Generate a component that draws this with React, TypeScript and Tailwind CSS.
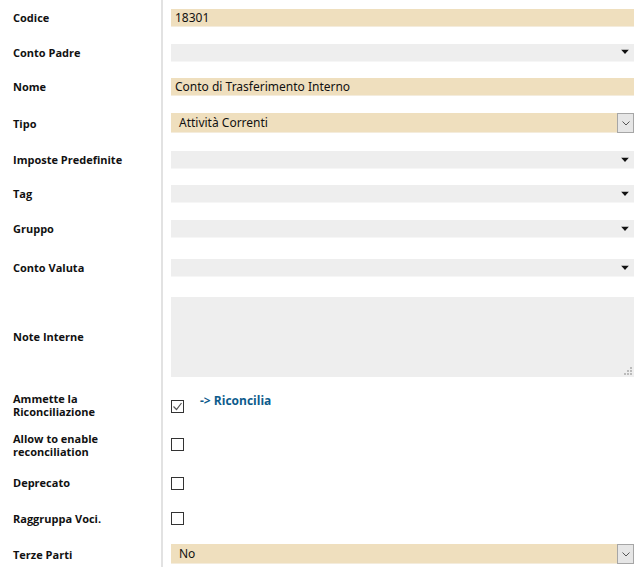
import React from "react";

const label = "text-[11px] font-bold text-[#111] leading-[13px]";
const lf = { fontFamily: '"Open Sans", "Noto Sans", sans-serif' };
const vf = { fontFamily: '"Noto Sans", "Open Sans", sans-serif' };

function Caret() {
  return (
    <svg width="8" height="5" viewBox="0 0 8 5" className="absolute right-[5px] top-1/2 -translate-y-1/2">
      <path d="M0 0h8L4 4.5z" fill="#111" />
    </svg>
  );
}

function GreySelect() {
  return <div className="relative h-[18px] w-full bg-[#eeeeee] border-b border-[#f6f6f6]"><Caret /></div>;
}

function BeigeInput({ value }: { value: string }) {
  return (
    <div className="h-[18px] w-full bg-[#efdfbe] border-b border-[#f4ecdc] pl-[4px] text-[12px] leading-[17px] text-[#111]" style={vf}>
      {value}
    </div>
  );
}

function BeigeSelect({ value }: { value: string }) {
  return (
    <div className="relative h-[20px] w-full bg-[#efdfbe] border-b border-[#f4ecdc] pl-[8px] text-[12px] leading-[19px] text-[#111]" style={vf}>
      {value}
      <div className="absolute right-0 top-0 h-[20px] w-[17px] bg-[#e6e6e6] border border-[#a6a6a6] flex items-center justify-center">
        <svg width="8" height="5" viewBox="0 0 8 5">
          <path d="M0.5 0.5L4 4l3.5-3.5" stroke="#555" strokeWidth="1" fill="none" />
        </svg>
      </div>
    </div>
  );
}

function Check({ on }: { on?: boolean }) {
  return (
    <div className="w-[13px] h-[13px] border border-[#333] bg-white flex items-center justify-center shrink-0">
      {on && (
        <svg width="11" height="11" viewBox="0 0 11 11">
          <path d="M1.5 5.5l3 3 5-6.5" stroke="#555" strokeWidth="1.2" fill="none" />
        </svg>
      )}
    </div>
  );
}

function Row({ name, h, children, top, labelCls }: { name: React.ReactNode; h: string; children: React.ReactNode; top?: string; labelCls?: string }) {
  return (
    <div className={`flex ${h}`}>
      <div className={`w-[163px] border-r-2 border-[#e2e2e2] pl-[13px] flex ${labelCls ?? "items-center"}`} style={lf}>
        <div className={label}>{name}</div>
      </div>
      <div className={`flex-1 pl-[8px] pr-[9px] flex ${top ?? "items-center"}`}>{children}</div>
    </div>
  );
}

export default function App() {
  return (
    <div className="bg-white w-[643px] h-[579px]">
      <Row name="Codice" h="h-[35px]"><BeigeInput value="18301" /></Row>
      <Row name="Conto Padre" h="h-[35px]"><GreySelect /></Row>
      <Row name="Nome" h="h-[34px]" labelCls="items-start pt-[10px]"><BeigeInput value="Conto di Trasferimento Interno" /></Row>
      <Row name="Tipo" h="h-[38px]"><BeigeSelect value="Attività Correnti" /></Row>
      <Row name="Imposte Predefinite" h="h-[36px]" labelCls="items-start pt-[11px]"><GreySelect /></Row>
      <Row name="Tag" h="h-[32px]" labelCls="items-start pt-[9px]"><GreySelect /></Row>
      <Row name="Gruppo" h="h-[38px]" labelCls="items-start pt-[12px]"><GreySelect /></Row>
      <Row name="Conto Valuta" h="h-[40px]" labelCls="items-start pt-[13px]"><GreySelect /></Row>
      <Row name="Note Interne" h="h-[98px]" labelCls="items-start pt-[42px]">
        <div className="relative w-full h-[80px] bg-[#eeeeee]">
          <svg width="8" height="8" viewBox="0 0 8 8" className="absolute right-[2px] bottom-[2px]">
            <rect x="6" y="0" width="2" height="2" fill="#bbb" />
            <rect x="3" y="3" width="2" height="2" fill="#bbb" />
            <rect x="6" y="3" width="2" height="2" fill="#bbb" />
            <rect x="0" y="6" width="2" height="2" fill="#bbb" />
            <rect x="3" y="6" width="2" height="2" fill="#bbb" />
            <rect x="6" y="6" width="2" height="2" fill="#bbb" />
          </svg>
        </div>
      </Row>
      <Row name={<>Ammette la<br />Riconciliazione</>} h="h-[41px]" top="items-start pt-[8px]" labelCls="items-start pt-[6px]">
        <div className="flex items-start">
          <div className="mt-[6px]"><Check on /></div>
          <a className="ml-[16px] text-[12px] font-bold text-[#0d5b8c] leading-[14px]" style={lf}>-&gt; Riconcilia</a>
        </div>
      </Row>
      <Row name={<>Allow to enable<br />reconciliation</>} h="h-[35px]"><Check /></Row>
      <Row name="Deprecato" h="h-[43px]" labelCls="items-start pt-[14px]"><Check /></Row>
      <Row name="Raggruppa Voci." h="h-[27px]"><Check /></Row>
      <Row name="Terze Parti" h="h-[35px]" top="items-start pt-[12px]" labelCls="items-start pt-[16px]"><BeigeSelect value="No" /></Row>
    </div>
  );
}
